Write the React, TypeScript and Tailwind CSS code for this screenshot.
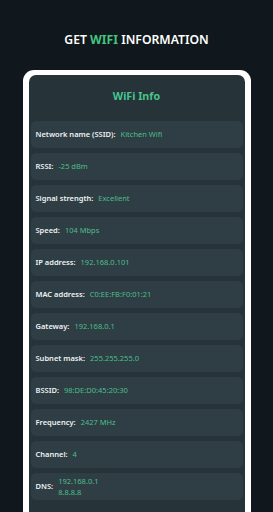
import React from "react";

const rows: { label: string; value: string[] }[] = [
  { label: "Network name (SSID):", value: ["Kitchen Wifi"] },
  { label: "RSSI:", value: ["-25 dBm"] },
  { label: "Signal strength:", value: ["Excellent"] },
  { label: "Speed:", value: ["104 Mbps"] },
  { label: "IP address:", value: ["192.168.0.101"] },
  { label: "MAC address:", value: ["C0:EE:FB:F0:01:21"] },
  { label: "Gateway:", value: ["192.168.0.1"] },
  { label: "Subnet mask:", value: ["255.255.255.0"] },
  { label: "BSSID:", value: ["98:DE:D0:45:20:30"] },
  { label: "Frequency:", value: ["2427 MHz"] },
  { label: "Channel:", value: ["4"] },
  { label: "DNS:", value: ["192.168.0.1", "8.8.8.8"] },
];

export default function App() {
  return (
    <div
      className="w-[273px] h-[512px] bg-[#10181d] overflow-hidden flex flex-col items-center"
      style={{ fontFamily: '"Noto Sans", "Open Sans", sans-serif' }}
    >
      <h1 className="mt-[30px] h-[20px] leading-[20px] text-[12.2px] font-semibold text-white">
        GET <span className="text-[#44c47f] font-bold">WIFI</span> INFORMATION
      </h1>
      <div className="mt-[20px] w-[228px] flex-1 rounded-t-[11px] bg-white px-[6px] pt-[5px]">
        <div className="h-full rounded-t-[7px] bg-[#263339] px-[2px]">
          <div className="h-[46px] pb-[4px] flex items-center justify-center text-[10.7px] font-bold text-[#46c58c]">
            WiFi Info
          </div>
          <div className="flex flex-col gap-[5px]">
            {rows.map((r) => (
              <div
                key={r.label}
                className="h-[27px] rounded-[5px] bg-[#2f3d44] pl-[5px] flex items-center gap-[5px] text-[7.5px]"
              >
                <span className="text-[#eef2f3] font-semibold">{r.label}</span>
                <span className="flex flex-col leading-[11px] text-[#4cbf8c]">
                  {r.value.map((v) => (
                    <span key={v}>{v}</span>
                  ))}
                </span>
              </div>
            ))}
          </div>
        </div>
      </div>
    </div>
  );
}
